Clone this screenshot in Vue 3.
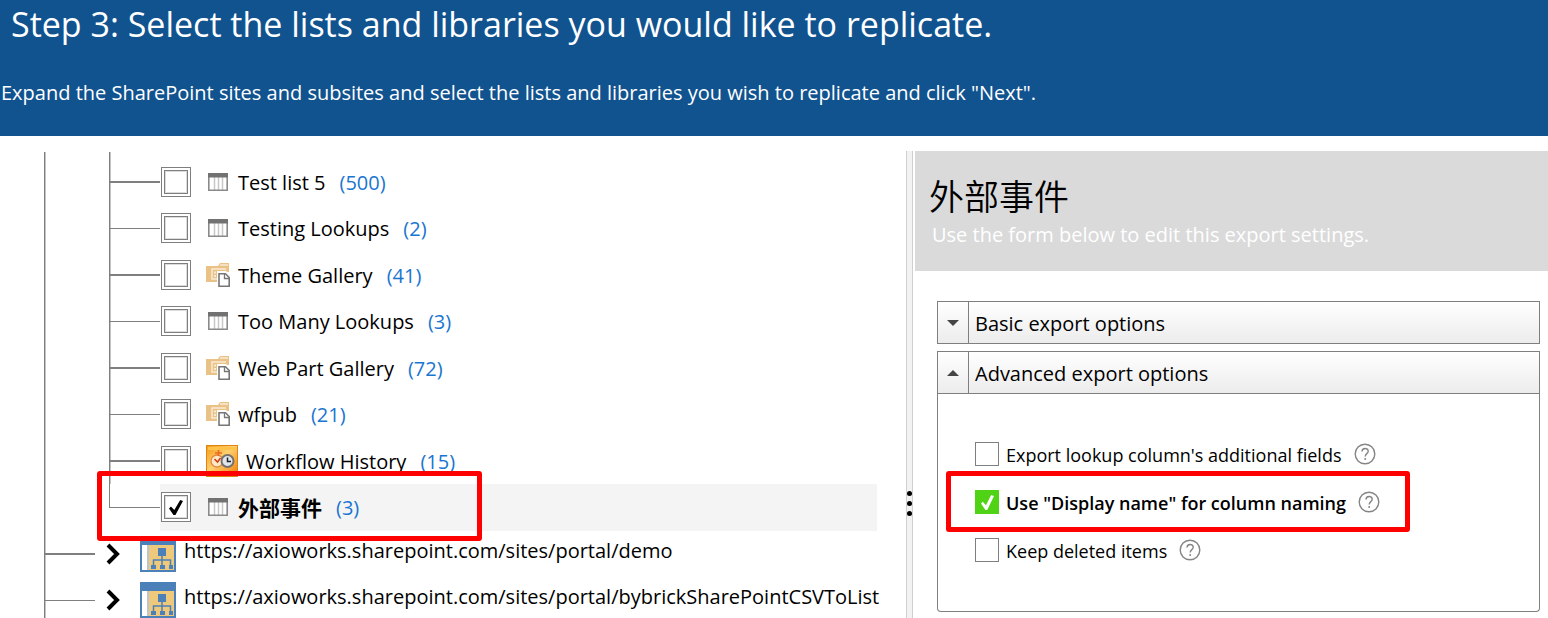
<template>
    <div class="wizard">
        <header class="wizard__header">
            <h1 class="wizard__title">Step 3: Select the lists and libraries you would like to replicate.</h1>
            <p class="wizard__hint">Expand the SharePoint sites and subsites and select the lists and libraries you wish to replicate and click "Next".</p>
        </header>
        <main class="wizard__body">
            <nav class="tree" aria-label="Sites">
                <ul class="tree__lists">
                    <li v-for="(l, i) in lists" :key="l.name" class="tree__row tree__row--list" :class="[l.checked && 'tree__row--selected']">
                        <span class="tree__branch"></span>
                        <div class="tree__item">
                            <input :id="'list-' + i" v-model="l.checked" class="tree__check" type="checkbox" />
                            <svg v-if="l.icon === 'list'" class="tree__icon" width="24" height="24" viewBox="0 0 24 24">
                                <rect x="2" y="3" width="20" height="18" fill="#fff" />
                                <path d="M8.500 6v14M12.500 6v14M16.500 6v14" stroke="#c8c8c8" stroke-width="1.500" />
                                <path d="M2.800 3.800h18.400v16.400H2.800z" fill="none" stroke="#8a8a8a" stroke-width="1.600" />
                                <path d="M2 3h20v4.500H2z" fill="#727272" />
                            </svg>
                            <svg v-else-if="l.icon === 'library'" class="tree__icon" width="24" height="24" viewBox="0 0 24 24">
                                <path d="M0 3h12l2-3h9v9H12v10H0z" fill="#ebc285" />
                                <path d="M14 2h8" stroke="#fff" />
                                <path d="M20 6H6v10h5" fill="none" stroke="#f9ecd6" stroke-width="1.500" />
                                <path d="M8 8.500h2v2H8zM11 8.500h2v2h-2zM8 12h2v2H8z" fill="#f9ecd6" />
                                <path d="M11 8h9l4 4v12H11z" fill="#fff" />
                                <path d="M13 10.800h6.500l3.700 3.700v8.700H13z" fill="#fff" stroke="#777" stroke-width="1.600" />
                                <path d="M18.500 11v4.500H23" fill="none" stroke="#777" stroke-width="1.300" />
                            </svg>
                            <svg v-else class="tree__icon" width="32" height="32" viewBox="0 0 32 32">
                                <defs>
                                    <linearGradient id="history" x1="0" y1="0" x2="1" y2="1">
                                        <stop offset="0" stop-color="#f49a16" />
                                        <stop offset="0.450" stop-color="#ffd070" />
                                        <stop offset="1" stop-color="#ee7c05" />
                                    </linearGradient>
                                </defs>
                                <rect x="0.500" y="0.500" width="31" height="31" fill="url(#history)" stroke="#dd8510" />
                                <path d="M2 2h28v3H2z" fill="#ffc34b" />
                                <circle cx="11" cy="16" r="6" fill="#ffe8c4" stroke="#e08a45" stroke-width="1.300" />
                                <path d="M8.500 14l3 3 3-4" fill="none" stroke="#d33a14" stroke-width="1.500" />
                                <path d="M9 8h7M12.500 5v6" stroke="#ee6a1a" stroke-width="1.600" />
                                <circle cx="21.500" cy="16" r="6" fill="#dfe6ec" stroke="#77716b" stroke-width="2" />
                                <path d="M21.500 12.500v4h3.500" fill="none" stroke="#222" stroke-width="1.500" />
                            </svg>
                            <label class="tree__name" :for="'list-' + i">{{ l.name }}</label>
                            <span class="tree__count">({{ l.count }})</span>
                        </div>
                        <span v-if="l.checked" class="mark mark--list"></span>
                    </li>
                </ul>
                <ul class="tree__sites">
                    <li v-for="s in sites" :key="s" class="tree__row tree__row--site">
                        <span class="tree__stub"></span>
                        <button class="tree__expand" type="button" :aria-label="'Expand ' + s">
                            <svg width="14" height="22" viewBox="0 0 14 22"><path d="M2 2l9 9-9 9" fill="none" stroke="#000" stroke-width="4" /></svg>
                        </button>
                        <svg class="tree__site-icon" width="36" height="36" viewBox="0 0 36 36">
                            <path d="M0 0h36v36H0z" fill="#4c80b8" />
                            <path d="M2 9h5v25H2z" fill="#fff" />
                            <path d="M7 9h2v25H7z" fill="#b9c6cf" />
                            <path d="M9 9h25v25H9z" fill="#eec97c" />
                            <path d="M18 12h8v8h-8zM11 29h5v4h-5zM20 29h5v4h-5zM29 29h4v4h-4z" fill="#4c80b8" />
                            <path d="M22 19v11M13.500 30v-6h17v6" fill="none" stroke="#4c80b8" stroke-width="1.500" />
                        </svg>
                        <span class="tree__url">{{ s }}</span>
                    </li>
                </ul>
            </nav>
            <div class="splitter" role="separator" aria-orientation="vertical">
                <i v-for="n in 3" :key="n" class="splitter__dot"></i>
            </div>
            <section class="settings">
                <div class="settings__head">
                    <h2 class="settings__title">外部事件</h2>
                    <p class="settings__hint">Use the form below to edit this export settings.</p>
                </div>
                <div class="settings__form">
                    <button class="fold" type="button" aria-expanded="false">
                        <span class="fold__arrow"><svg width="12" height="6" viewBox="0 0 12 6"><path d="M0 0h12L6 6z" fill="#444" /></svg></span>
                        <span class="fold__label">Basic export options</span>
                    </button>
                    <div class="fold-group">
                        <button class="fold" type="button" aria-expanded="true">
                            <span class="fold__arrow"><svg width="12" height="6" viewBox="0 0 12 6"><path d="M0 6h12L6 0z" fill="#444" /></svg></span>
                            <span class="fold__label">Advanced export options</span>
                        </button>
                        <div class="fold-group__panel">
                            <div v-for="o in options" :key="o.key" class="option" :class="[o.checked && 'option--on']">
                                <input :id="o.key" v-model="o.checked" class="option__check" type="checkbox" />
                                <label class="option__label" :for="o.key">{{ o.label }}</label>
                                <svg class="option__help" width="22" height="22" viewBox="0 0 22 22">
                                    <circle cx="11" cy="11" r="9.800" fill="none" stroke="#858585" stroke-width="1.400" />
                                    <path d="M8 8.600c0-4 6.200-4 6.200-.4 0 2.400-3 2.500-3 5.300" fill="none" stroke="#858585" stroke-width="1.400" />
                                    <circle cx="11.200" cy="16" r="1" fill="#858585" />
                                </svg>
                                <span v-if="o.checked" class="mark mark--option"></span>
                            </div>
                        </div>
                    </div>
                </div>
            </section>
        </main>
    </div>
</template>

<script setup>
import { reactive } from 'vue';

const lists = reactive([
    { name: 'Test list 5', count: 500, icon: 'list', checked: false },
    { name: 'Testing Lookups', count: 2, icon: 'list', checked: false },
    { name: 'Theme Gallery', count: 41, icon: 'library', checked: false },
    { name: 'Too Many Lookups', count: 3, icon: 'list', checked: false },
    { name: 'Web Part Gallery', count: 72, icon: 'library', checked: false },
    { name: 'wfpub', count: 21, icon: 'library', checked: false },
    { name: 'Workflow History', count: 15, icon: 'history', checked: false },
    { name: '外部事件', count: 3, icon: 'list', checked: true }
]);
const sites = ['https://axioworks.sharepoint.com/sites/portal/demo', 'https://axioworks.sharepoint.com/sites/portal/bybrickSharePointCSVToList'];
const options = reactive([
    { key: 'lookup', label: "Export lookup column's additional fields", checked: false },
    { key: 'display', label: 'Use "Display name" for column naming', checked: true },
    { key: 'deleted', label: 'Keep deleted items', checked: false }
]);
</script>

<style>
body {
    margin: 0;
    background: #fff;
}
</style>

<style scoped>
.wizard {
    display: flex;
    flex-direction: column;
    height: 100vh;
    overflow: hidden;
    color: #000;
    font-family: 'Open Sans', 'Noto Sans CJK SC', sans-serif;
    font-size: 20px;
    line-height: 28px;
    white-space: nowrap;
}
.wizard *,
.wizard *::before {
    box-sizing: border-box;
}
.wizard h1,
.wizard h2,
.wizard p,
.wizard ul {
    margin: 0;
    padding: 0;
    font-weight: 400;
    list-style: none;
}
.wizard__header {
    flex: none;
    height: 136px;
    background: #11538f;
    color: #fff;
}
.wizard .wizard__title {
    padding: 0 11px;
    font-size: 34px;
    line-height: 48px;
}
.wizard .wizard__hint {
    padding: 31px 1px 0;
}
.wizard__body {
    flex: 1;
    display: grid;
    grid-template-columns: minmax(0, 906fr) 9px minmax(0, 633fr);
    min-height: 0;
    padding-top: 15px;
}
.tree {
    margin: 1px 29px 0 44px;
    border-left: 1px solid #7f7f7f;
    box-shadow: inset 1px 0 #c4c4c4;
}
.wizard .tree__lists {
    margin-left: 64px;
}
.tree__lists::before {
    content: '';
    display: block;
    height: 7px;
    border-left: 1px solid #7f7f7f;
    box-shadow: inset 1px 0 #c4c4c4;
}
.tree__row {
    position: relative;
    display: flex;
    align-items: center;
    height: 46px;
}
.tree__row:nth-child(even) {
    height: 47px;
}
.tree__branch {
    align-self: stretch;
    width: 51px;
    border-left: 1px solid #7f7f7f;
    box-shadow: inset 1px 0 #c4c4c4;
}
.tree__branch::before {
    content: '';
    display: block;
    height: 24px;
    border-bottom: 2px solid #7f7f7f;
}
.tree__row:nth-child(even) .tree__branch::before {
    border-bottom-width: 1px;
}
.tree__row:last-child .tree__branch {
    border-left: 0;
    box-shadow: none;
}
.tree__row:last-child .tree__branch::before {
    border-left: 1px solid #7f7f7f;
}
.tree__item {
    flex: 1;
    align-self: stretch;
    display: flex;
    align-items: center;
}
.tree__row:nth-child(even) .tree__item,
.tree__row--site:nth-child(even) {
    padding-bottom: 1px;
}
.tree__row--selected .tree__item {
    background: #f4f4f4;
}
.tree__check {
    appearance: none;
    flex: none;
    width: 30px;
    height: 30px;
    margin: 0 15px 0 1px;
    border: 1px solid #7f7f7f;
    background: #fff;
    box-shadow: inset 0 0 0 2px #fff, inset 0 0 0 3px #7f7f7f, inset 0 0 0 4px #dcdcdc;
}
.tree__check:checked::before {
    content: '';
    display: block;
    width: 14px;
    height: 15px;
    margin: 7px;
    background: #000;
    clip-path: polygon(0 57%, 14% 43%, 38% 66%, 80% 0, 100% 6%, 46% 100%, 32% 100%);
}
.tree__icon {
    flex: none;
    margin-right: 8px;
}
.tree__name,
.tree__count {
    padding-top: 2px;
}
.tree__row--selected .tree__name {
    font-size: 21px;
    font-weight: 700;
}
.tree__count {
    margin-left: 14px;
    color: #1a75d1;
}
.tree__stub {
    flex: none;
    width: 50px;
    border-top: 2px solid #7f7f7f;
}
.tree__row:nth-child(even) .tree__stub {
    border-top-width: 1px;
}
.tree__expand {
    flex: none;
    display: flex;
    margin: 0 20px 0 11px;
    padding: 0;
    border: 0;
    background: transparent;
    cursor: pointer;
}
.tree__site-icon {
    flex: none;
    margin-right: 8px;
}
.tree__url {
    padding-bottom: 6px;
}
.splitter {
    display: flex;
    flex-direction: column;
    align-items: center;
    gap: 5px;
    width: 7px;
    padding-top: 340px;
    border: 1px solid #cfcfcf;
    border-width: 0 1px;
    background: #f2f2f2;
    cursor: col-resize;
}
.splitter__dot {
    flex: none;
    width: 5px;
    height: 5px;
    border-radius: 50%;
    background: #000;
}
.settings__head {
    height: 120px;
    padding: 22px 14px 0;
    background: #dadada;
}
.wizard .settings__title {
    font-size: 35px;
    font-weight: 350;
    line-height: 48px;
}
.wizard .settings__hint {
    padding-left: 3px;
    color: #fff;
}
.settings__form {
    display: flex;
    flex-direction: column;
    gap: 7px;
    padding: 30px 8px 0 22px;
}
.fold {
    display: flex;
    align-items: stretch;
    width: 100%;
    height: 43px;
    padding: 0;
    border: 1px solid #7f7f7f;
    background: linear-gradient(#fff, #ececec);
    color: inherit;
    font: inherit;
    text-align: left;
    cursor: pointer;
}
.fold__arrow {
    display: flex;
    align-items: center;
    justify-content: center;
    width: 31px;
    border-right: 1px solid #7f7f7f;
}
.fold__label {
    padding: 8px 6px 0;
}
.fold-group__panel {
    display: flex;
    flex-direction: column;
    gap: 20px;
    padding: 46px 37px 47px;
    border: 1px solid #7f7f7f;
    border-top: 0;
    border-radius: 0 0 4px 4px;
}
.option {
    position: relative;
    display: flex;
    align-items: center;
    align-self: flex-start;
    height: 28px;
    font-size: 18px;
}
.option__check {
    appearance: none;
    flex: none;
    width: 24px;
    height: 24px;
    margin: 0 7px 0 0;
    border: 1px solid #7f7f7f;
    background: #fff;
}
.option__check:checked {
    border-color: #50d215;
    background: #50d215;
}
.option__check:checked::before {
    content: '';
    display: block;
    width: 13px;
    height: 15px;
    margin: 4px 5px;
    background: #fff;
    clip-path: polygon(0 57%, 14% 45%, 38% 68%, 78% 0, 100% 6%, 48% 100%, 34% 100%);
}
.option__label {
    padding-top: 2px;
}
.option--on .option__label {
    font-weight: 600;
}
.option__help {
    flex: none;
    margin-left: 12px;
}
/* callout frames sit over the rows they highlight */
.mark {
    position: absolute;
    z-index: 1;
    border: 5px solid #f00;
    border-radius: 3px;
    pointer-events: none;
}
.mark--list {
    top: -13px;
    bottom: -10px;
    left: -12px;
    width: 385px;
}
.mark--option {
    top: -17px;
    bottom: -16px;
    left: -29px;
    width: 464px;
}
</style>
